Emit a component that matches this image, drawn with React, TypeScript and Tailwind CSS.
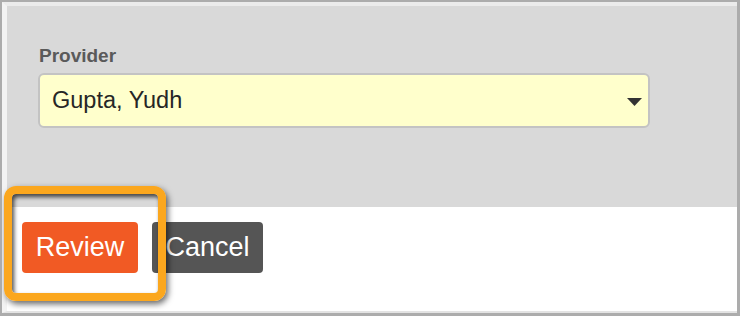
import React from "react";

export default function App() {
  return (
    <div
      className="relative w-[740px] h-[316px] bg-white border-t-2 border-l-2 border-r-[3px] border-b-[3px] border-[#acacac] overflow-hidden"
      style={{ fontFamily: '"Liberation Sans", Arial, sans-serif' }}
    >
      <div className="flex flex-col h-full border-t-4 border-l-[5px] border-b-2 border-t-[#ebebeb] border-l-[#f3f3f3] border-b-[#e3e3e3]">
        <div className="h-[201px] bg-[#d9d9d9] pt-[39px] pl-[31px]">
          <div className="text-[19px] leading-[22px] font-bold text-[#5a5a5a] pl-[1px]">Provider</div>
          <div className="mt-[6px] w-[612px] h-[55px] rounded-[6px] border-2 border-[#c3c3c3] bg-[#ffffcc] flex items-center justify-between pl-[12px] pr-[6px]">
            <span className="text-[23.5px] text-[#262626]">Gupta, Yudh</span>
            <svg width="15" height="8" viewBox="0 0 15 8" className="mt-[2px]">
              <polygon points="0,0 15,0 7.5,8" fill="#333333" />
            </svg>
          </div>
        </div>
        <div className="flex-1 pt-[15px] pl-[15px] flex items-start gap-[14px]">
          <button className="w-[116px] h-[51px] rounded-[4px] bg-[#f15a24] text-white text-[27px] leading-none flex items-center justify-center">
            Review
          </button>
          <button className="w-[111px] h-[51px] rounded-[4px] bg-[#555555] text-white text-[27px] leading-none flex items-center justify-center">
            Cancel
          </button>
        </div>
      </div>
      <div className="absolute left-[2px] top-[184px] w-[162px] h-[115px] rounded-[12px] border-[8px] border-[#fba71e] shadow-[2px_3px_6px_rgba(0,0,0,0.6),inset_2px_3px_4px_rgba(0,0,0,0.7)]" />
    </div>
  );
}
